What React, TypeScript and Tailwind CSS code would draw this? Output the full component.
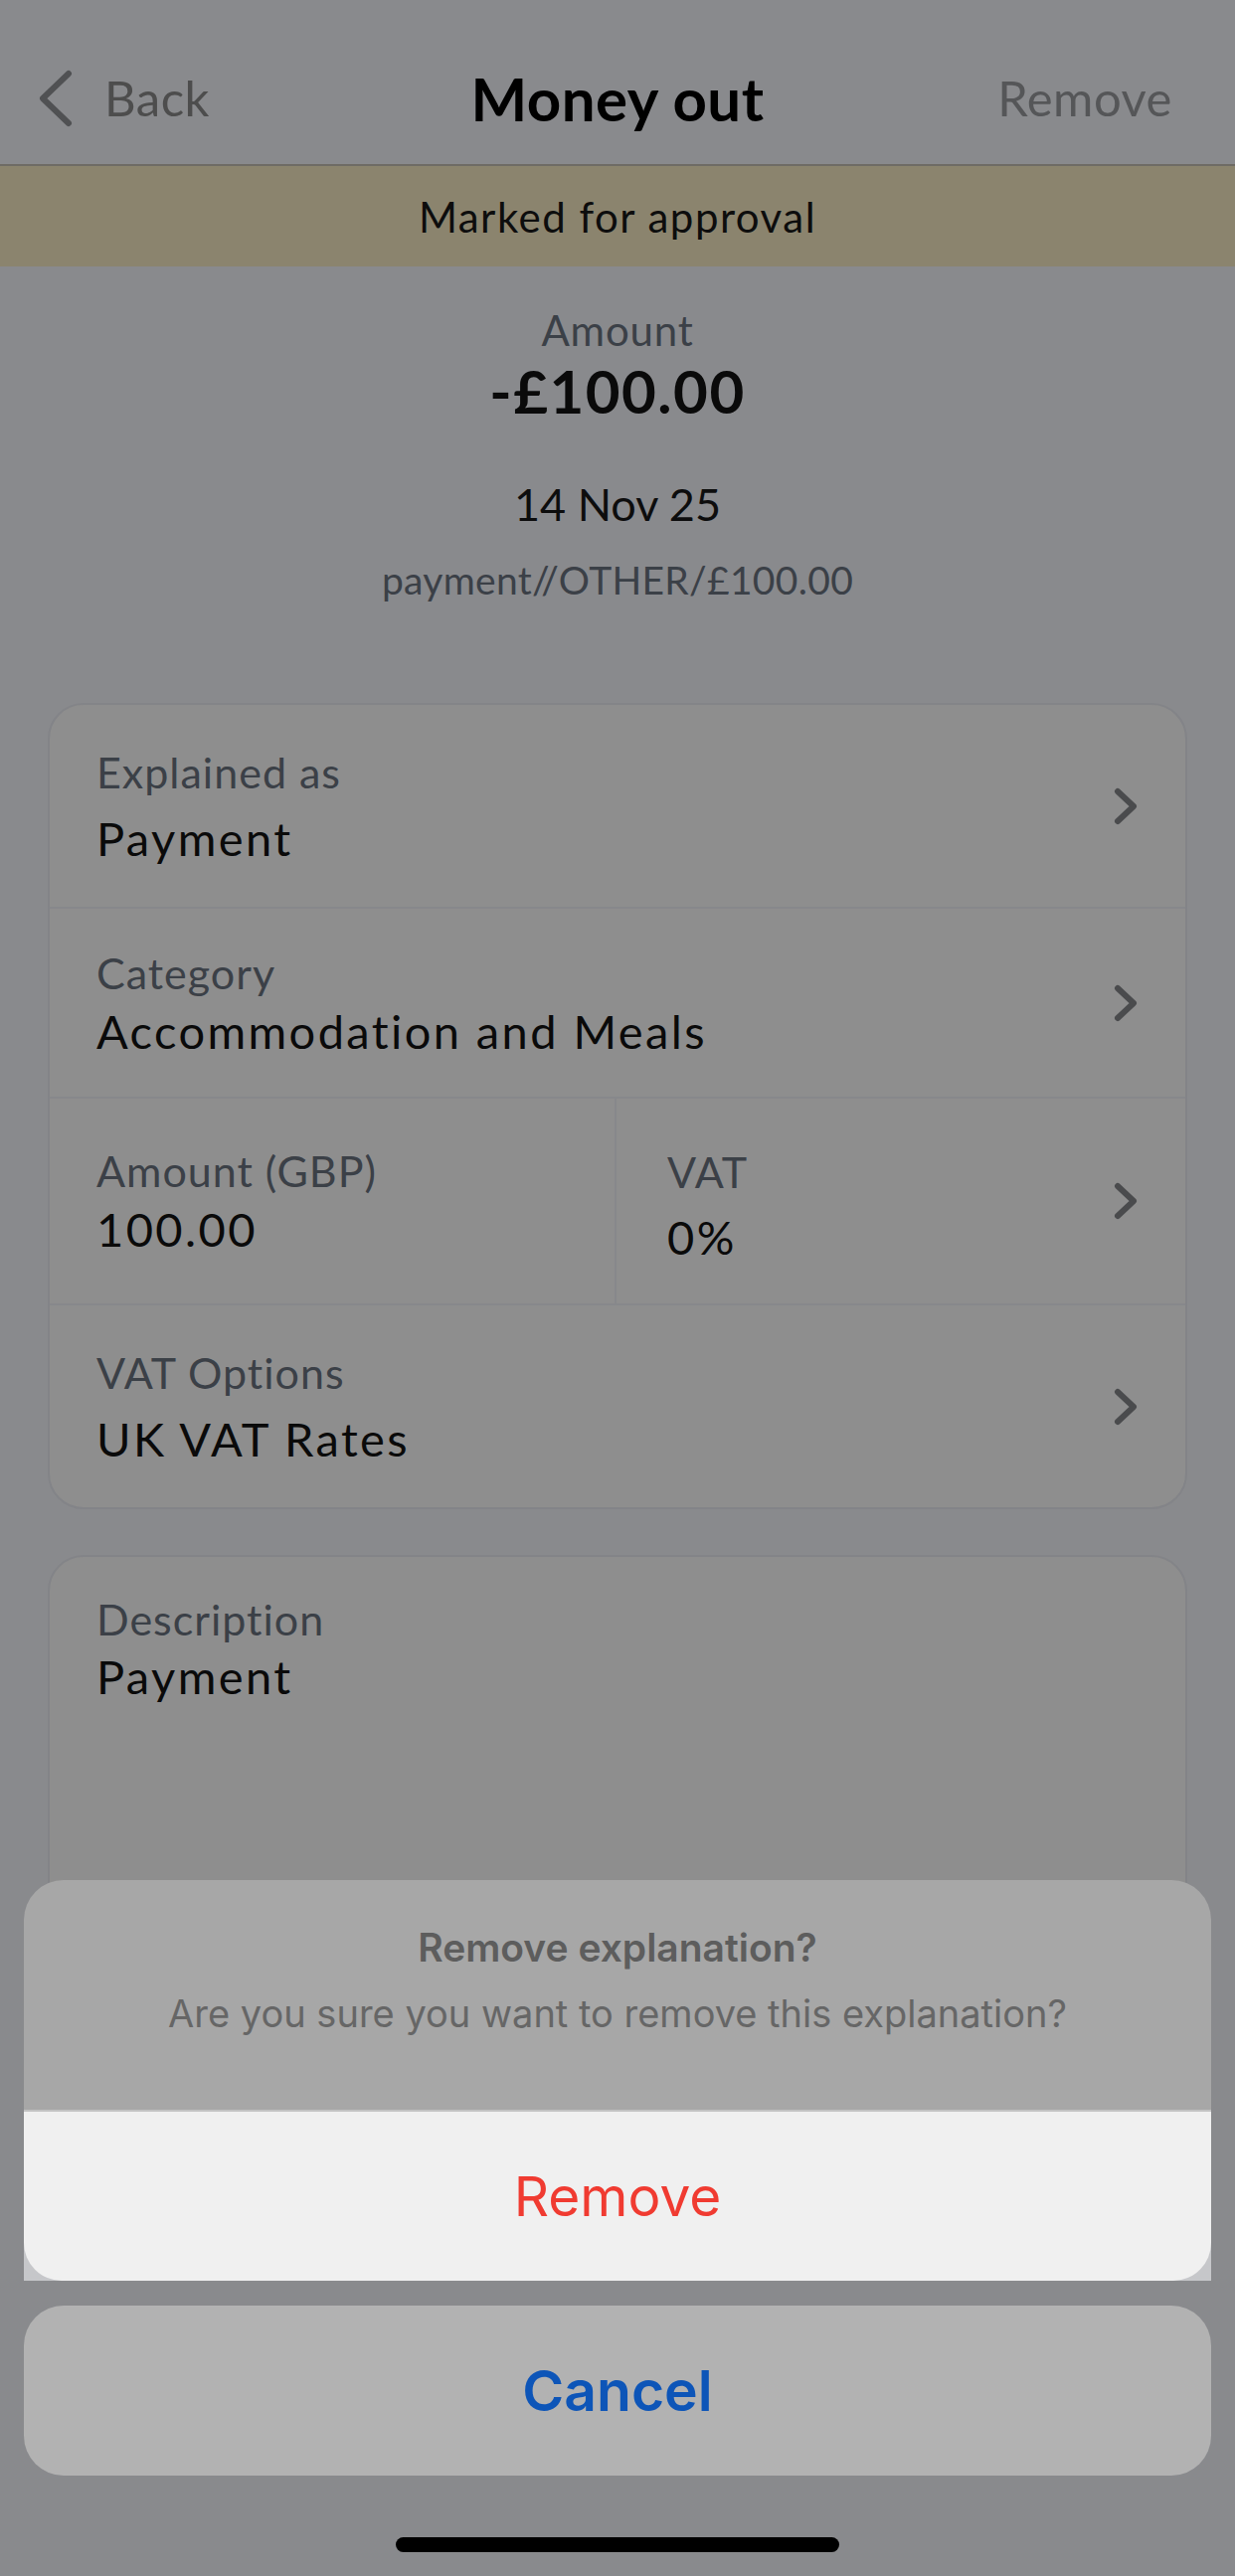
import React from "react";

const app = { fontFamily: "Lato, 'Open Sans', sans-serif" };
const sys = { fontFamily: "Inter, Roboto, sans-serif" };

function Chevron() {
  return (
    <svg width="26" height="38" viewBox="0 0 26 38" className="shrink-0">
      <polyline
        points="4,4 20,19 4,34"
        fill="none"
        stroke="#4a4b4d"
        strokeWidth="6"
        strokeLinecap="round"
        strokeLinejoin="round"
      />
    </svg>
  );
}

function Field({ label, value, gap }: { label: string; value: string; gap: string }) {
  return (
    <div className="flex flex-col">
      <span className="text-[43px] leading-none tracking-[1px] text-[#3b4047]">{label}</span>
      <span className={`text-[47px] leading-none tracking-[2.4px] text-[#0a0a0a] ${gap}`}>{value}</span>
    </div>
  );
}

export default function App() {
  return (
    <div className="relative w-[1242px] h-[2591px] overflow-hidden bg-[#898a8d]" style={app}>
      {/* nav bar */}
      <div className="h-[167px] pt-[32px] grid grid-cols-3 items-center border-b-2 border-[#6e6b65] px-[38px]">
        <div className="flex items-center gap-[31px] text-[49px] leading-none tracking-[0.5px] text-[#4d4d4d]">
          <svg width="36" height="58" viewBox="0 0 36 58">
            <polyline
              points="31,4 5,29 31,54"
              fill="none"
              stroke="#505153"
              strokeWidth="6"
              strokeLinecap="round"
              strokeLinejoin="round"
            />
          </svg>
          <span>Back</span>
        </div>
        <div className="text-center text-[60px] font-bold leading-none tracking-[0.5px] text-black">Money out</div>
        <div className="text-right pr-[25px] text-[49px] leading-none tracking-[0.5px] text-[#555658]">Remove</div>
      </div>

      {/* approval banner */}
      <div className="h-[101px] flex items-center justify-center bg-[#8b846e] text-[42px] leading-none tracking-[1.5px] text-[#0d0d0d]">
        Marked for approval
      </div>

      {/* amount summary */}
      <div className="flex flex-col items-center">
        <span className="mt-[43px] text-[42px] leading-none tracking-[0.8px] text-[#3b4047]">Amount</span>
        <span className="mt-[10px] text-[60px] font-bold leading-none tracking-[1.5px] text-[#0a0a0a]">-£100.00</span>
        <span className="mt-[62px] text-[45px] leading-none text-[#0d0d0d]">14 Nov 25</span>
        <span className="mt-[34px] text-[39px] leading-none tracking-[0.3px] text-[#3b4047]">payment//OTHER/£100.00</span>
      </div>

      <div className="px-[48px]">
        {/* details card */}
        <div className="mt-[104px] rounded-[36px] border-2 border-[#838488] bg-[#8e8e8e]">
          <div className="h-[205px] flex items-center justify-between pl-[47px] pr-[46px] border-b-2 border-[#87888b]">
            <Field label="Explained as" value="Payment" gap="mt-[22px]" />
            <Chevron />
          </div>
          <div className="h-[191px] flex items-center justify-between pl-[47px] pr-[46px] border-b-2 border-[#87888b]">
            <Field label="Category" value="Accommodation and Meals" gap="mt-[14px]" />
            <Chevron />
          </div>
          <div className="h-[208px] flex border-b-2 border-[#87888b]">
            <div className="w-[570px] flex items-center pl-[47px] border-r-2 border-[#87888b]">
              <Field label="Amount (GBP)" value="100.00" gap="mt-[14px]" />
            </div>
            <div className="flex-1 flex items-center justify-between pl-[51px] pr-[46px]">
              <div className="pt-[8px]">
                <Field label="VAT" value="0%" gap="mt-[21px]" />
              </div>
              <Chevron />
            </div>
          </div>
          <div className="h-[203px] flex items-center justify-between pl-[47px] pr-[46px]">
            <Field label="VAT Options" value="UK VAT Rates" gap="mt-[22px]" />
            <Chevron />
          </div>
        </div>

        {/* description card */}
        <div className="mt-[46px] h-[560px] rounded-[36px] border-2 border-[#838488] bg-[#8e8e8e] pl-[47px] pt-[41px]">
          <Field label="Description" value="Payment" gap="mt-[13px]" />
        </div>
      </div>

      {/* action sheet */}
      <div className="absolute left-[24px] right-[24px] top-[1891px]" style={sys}>
        <div className="h-[231px] rounded-t-[40px] bg-[#a7a7a7] flex flex-col items-center pt-[48px]">
          <span className="text-[39px] font-semibold leading-none text-[#5d5d5d]">Remove explanation?</span>
          <span className="mt-[28px] text-[38px] leading-none text-[#666666]">
            Are you sure you want to remove this explanation?
          </span>
        </div>
        <div className="h-[2px] bg-[#c2c2c2]" />
        <div className="bg-[#c6c7ca]">
          <div className="h-[170px] rounded-b-[38px] bg-[#f0f0f0] flex items-center justify-center text-[55px] leading-none text-[#f03b31]">
            Remove
          </div>
        </div>
        <div className="mt-[25px] h-[171px] rounded-[40px] bg-[#b2b2b2] flex items-center justify-center text-[57px] font-semibold leading-none text-[#0d55b8]">
          Cancel
        </div>
      </div>

      {/* home indicator */}
      <div className="absolute left-[398px] top-[2552px] w-[446px] h-[15px] rounded-full bg-black" />
    </div>
  );
}
